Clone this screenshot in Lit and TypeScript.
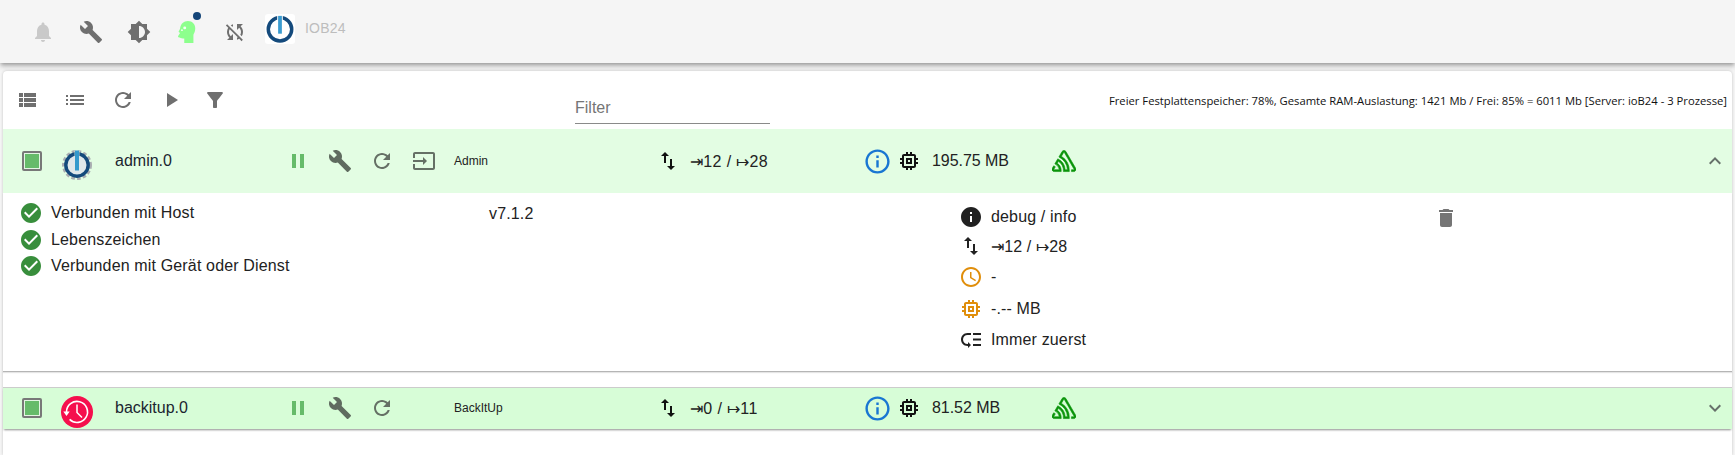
import { LitElement, html, css, svg } from "lit";
import { customElement } from "lit/decorators.js";

const P = {
  bell: "M12 22c1.1 0 2-.9 2-2h-4c0 1.1.89 2 2 2zm6-6v-5c0-3.07-1.64-5.64-4.5-6.32V4c0-.83-.67-1.5-1.5-1.5s-1.5.67-1.5 1.5v.68C7.63 5.36 6 7.92 6 11v5l-2 2v1h16v-1l-2-2z",
  build: "M22.7 19l-9.1-9.1c.9-2.3.4-5-1.5-6.9-2-2-5-2.4-7.4-1.3L9 6 6 9 1.6 4.7C.4 7.1.9 10.1 2.9 12.1c1.9 1.9 4.6 2.4 6.9 1.5l9.1 9.1c.4.4 1 .4 1.4 0l2.3-2.3c.5-.4.5-1.1.1-1.4z",
  bright: "M20 15.31L23.31 12 20 8.69V4h-4.69L12 .69 8.69 4H4v4.69L.69 12 4 15.31V20h4.69L12 23.31 15.31 20H20v-4.69zM12 18V6c3.31 0 6 2.69 6 6s-2.69 6-6 6z",
  syncOff: "M10 6.35V4.26c-.8.21-1.55.54-2.23.96l1.46 1.46c.25-.12.5-.24.77-.33zm-7.14-.94l2.36 2.36C4.45 8.99 4 10.44 4 12c0 2.21.91 4.2 2.36 5.64L4 20h6v-6l-2.24 2.24C6.68 15.15 6 13.66 6 12c0-1 .25-1.94.68-2.77l8.08 8.08c-.25.13-.5.25-.77.34v2.09c.8-.21 1.55-.54 2.23-.96l2.36 2.36 1.27-1.27L4.14 4.14 2.86 5.41zM20 4h-6v6l2.24-2.24C17.32 8.85 18 10.34 18 12c0 1-.25 1.94-.68 2.77l1.46 1.46C19.55 15.01 20 13.56 20 12c0-2.21-.91-4.2-2.36-5.64L20 4z",
  viewList: "M4 14h4v-4H4v4zm0 5h4v-4H4v4zM4 9h4V5H4v4zm5 5h12v-4H9v4zm0 5h12v-4H9v4zM9 5v4h12V5H9z",
  list: "M3 13h2v-2H3v2zm0 4h2v-2H3v2zm0-8h2V7H3v2zm4 4h14v-2H7v2zm0 4h14v-2H7v2zM7 7v2h14V7H7z",
  refresh: "M17.65 6.35C16.2 4.9 14.21 4 12 4c-4.42 0-7.99 3.58-7.99 8s3.57 8 7.99 8c3.73 0 6.84-2.55 7.73-6h-2.08c-.82 2.33-3.04 4-5.65 4-3.31 0-6-2.69-6-6s2.69-6 6-6c1.66 0 3.14.69 4.22 1.78L13 11h7V4l-2.35 2.35z",
  play: "M8 5v14l11-7z",
  filter: "M4.25 5.61C6.27 8.2 10 13 10 13v6c0 .55.45 1 1 1h2c.55 0 1-.45 1-1v-6s3.72-4.8 5.74-7.39c.51-.66.04-1.61-.79-1.61H5.04c-.83 0-1.3.95-.79 1.61z",
  pause: "M6 19h4V5H6v14zm8-14v14h4V5h-4z",
  input: "M21 3.01H3c-1.1 0-2 .9-2 2V9h2V4.99h18v14.03H3V15H1v4.01c0 1.1.9 1.98 2 1.98h18c1.1 0 2-.88 2-1.98v-14c0-1.11-.9-2-2-2zM11 16l4-4-4-4v3H1v2h10v3z",
  swap: "M9 3L5 6.99h3V14h2V6.99h3L9 3zm7 14.01V10h-2v7.01h-3L15 21l4-3.99h-3z",
  info: "M11 7h2v2h-2zm0 4h2v6h-2zm1-9C6.48 2 2 6.48 2 12s4.48 10 10 10 10-4.48 10-10S17.52 2 12 2zm0 18c-4.41 0-8-3.59-8-8s3.59-8 8-8 8 3.59 8 8-3.59 8-8 8z",
  memory: "M15 9H9v6h6V9zm-2 4h-2v-2h2v2zm8-2V9h-2V7c0-1.1-.9-2-2-2h-2V3h-2v2h-2V3H9v2H7c-1.1 0-2 .9-2 2v2H3v2h2v2H3v2h2v2c0 1.1.9 2 2 2h2v2h2v-2h2v2h2v-2h2c1.1 0 2-.9 2-2v-2h2v-2h-2v-2h2zm-4 6H7V7h10v10z",
  less: "M12 8l-6 6 1.41 1.41L12 10.83l4.59 4.58L18 14z",
  more: "M16.59 8.59L12 13.17 7.41 8.59 6 10l6 6 6-6z",
  check: "M12 2C6.48 2 2 6.48 2 12s4.48 10 10 10 10-4.48 10-10S17.52 2 12 2zm-2 15l-5-5 1.41-1.41L10 14.17l7.59-7.59L19 8l-9 9z",
  infoFill: "M12 2C6.48 2 2 6.48 2 12s4.48 10 10 10 10-4.48 10-10S17.52 2 12 2zm1 15h-2v-6h2v6zm0-8h-2V7h2v2z",
  clock: "M11.99 2C6.47 2 2 6.48 2 12s4.47 10 9.99 10C17.52 22 22 17.52 22 12S17.52 2 11.99 2zM12 20c-4.42 0-8-3.58-8-8s3.58-8 8-8 8 3.58 8 8-3.58 8-8 8zm.5-13H11v6l5.25 3.15.75-1.23-4.5-2.67z",
  trash: "M6 19c0 1.1.9 2 2 2h8c1.1 0 2-.9 2-2V7H6v12zM19 4h-3.5l-1-1h-5l-1 1H5v2h14V4z",
  prio: "M14 5h8v2h-8zm0 5.5h8v2h-8zm0 5.5h8v2h-8zM2 11.5C2 15.08 4.92 18 8.5 18H9v2l3-3-3-3v2h-.5C6.02 16 4 13.98 4 11.5S6.02 7 8.5 7H12V5H8.5C4.92 5 2 7.92 2 11.5z",
  sentry: "M13.91 2.505c-.873-1.448-2.972-1.448-3.844 0L6.904 7.92a15.478 15.478 0 0 1 8.53 12.811h-2.221A13.301 13.301 0 0 0 5.784 9.814l-2.926 5.06a7.65 7.65 0 0 1 4.435 5.848H2.194a.365.365 0 0 1-.298-.534l1.413-2.402a5.16 5.16 0 0 0-1.614-.913L.296 19.275a2.182 2.182 0 0 0 .812 2.999 2.24 2.24 0 0 0 1.086.288h6.983a9.322 9.322 0 0 0-3.845-8.318l1.11-1.922a11.47 11.47 0 0 1 4.95 10.24h5.915a17.242 17.242 0 0 0-7.885-15.28l2.244-3.845a.37.37 0 0 1 .504-.13c.255.14 9.75 16.708 9.928 16.9a.365.365 0 0 1-.327.543h-2.287c.029.612.029 1.223 0 1.831h2.297a2.206 2.206 0 0 0 1.922-3.31z",
};

const ic = (d: string, size: number, color: string) => html`<svg width=${size} height=${size} viewBox="0 0 24 24" fill=${color}><path d=${d}></path></svg>`;

const sentryIcon = html`<svg width="24" height="24" viewBox="0 0 24 24" fill="#0a940a" stroke="#0a940a" stroke-width=".6"><path d=${P.sentry}></path></svg>`;

const ioLogo = svg`
  <circle cx="16" cy="16.200" r="12.500" fill="none" stroke="#144a7c" stroke-width="3.700"></circle>
  <rect x="13" y="1" width="6" height="6" fill="#fff"></rect>
  <rect x="14" y="2" width="4" height="19" fill="#3a9bd0"></rect>`;

const adminLogo = html`<svg width="32" height="32" viewBox="0 0 32 32">
  <circle cx="16" cy="16" r="13.500" fill="none" stroke="#a9adb1" stroke-width="3" stroke-dasharray="3.600 2.200"></circle>
  <circle cx="16" cy="16" r="11.200" fill="#dfe7ea"></circle>
  <circle cx="16" cy="16" r="11.200" fill="none" stroke="#144a7c" stroke-width="3.400"></circle>
  <rect x="13.600" y="1.500" width="4.800" height="6" fill="#dff8e8"></rect>
  <rect x="14" y="1.500" width="4" height="20" fill="#3399cc"></rect>
</svg>`;

const backitupLogo = html`<svg width="32" height="32" viewBox="0 0 32 32">
  <circle cx="16" cy="16" r="16" fill="#f50f4d"></circle>
  <path d="M5.500 16a10.500 10.500 0 1 1 3.100 7.400" fill="none" stroke="#fff" stroke-width="1.600"></path>
  <path d="M2.300 15.500h6.400L5.500 20z" fill="#fff"></path>
  <path d="M16 8.500v8l5 5" fill="none" stroke="#fff" stroke-width="1.500"></path>
</svg>`;

const headIcon = html`<svg width="22" height="26" viewBox="0 0 24 28">
  <path d="M4 20c-.8-.2-2-.6-1.800-1.500L4.400 15 3 14c-.6-.6 1-2.200 1.400-3.600C5 5 8.500 2 13 2c5 0 8 3.600 8 8 0 3.400-1 5-2 7v9H9v-5c-2 0-4 0-5-1z" fill="#8dff8d"></path>
  <circle cx="9.500" cy="9.500" r="1.600" fill="#f4fff4"></circle>
  <circle cx="6.500" cy="12" r="1" fill="#f4fff4"></circle>
</svg>`;

interface Row { name: string; title: string; logo: unknown; input: boolean; conn: string; mem: string; open: boolean; }

@customElement("app-root")
export class AppRoot extends LitElement {
  static styles = css`
    :host { display: block; width: 1735px; height: 455px; overflow: hidden; background: #f5f5f5; font-family: "Liberation Sans", Arial, sans-serif; color: #212121; }
    svg { display: block; flex: none; }
    .appbar { height: 63px; background: #f5f5f5; box-shadow: 0 2px 4px -1px rgba(0,0,0,.3), 0 4px 5px 0 rgba(0,0,0,.16); display: flex; align-items: center; padding-left: 19px; position: relative; }
    .bar-btn { width: 48px; height: 48px; display: flex; align-items: center; justify-content: center; position: relative; }
    .dot { position: absolute; left: 30px; top: 4px; width: 8px; height: 8px; border-radius: 50%; background: #144578; }
    .brand { width: 30px; height: 30px; background: #fff; border-radius: 3px; margin-left: 6px; margin-top: -6px; }
    .brand-text { margin-left: 10px; margin-top: -7px; font-size: 14px; color: #bdbdbd; letter-spacing: .2px; }
    .paper { margin: 8px 3px 0; height: 384px; background: #fff; border-radius: 4px 4px 0 0; box-shadow: 0 0 3px rgba(0,0,0,.2); }
    .toolbar { height: 58px; display: flex; align-items: center; }
    .tool { width: 48px; height: 48px; display: flex; align-items: center; justify-content: center; }
    .tool.narrow { width: 39px; }
    .filter { margin-left: 341px; width: 195px; height: 30px; margin-top: 16px; border-bottom: 1px solid #8a8a8a; font-size: 16px; color: #757575; line-height: 29px; }
    .status { margin-left: auto; margin-top: 1px; padding-right: 5px; font-family: "Open Sans", "Liberation Sans", sans-serif; font-size: 11.26px; color: #111; white-space: nowrap; }
    .row { display: grid; grid-template-columns: 58px 32px 184px 42px 42px 42px 42px 212px 22px 182px 32px 32px 127px 1fr 34px; align-items: center; height: 64px; background: #e3fde3; color: #1b2530; box-sizing: border-box; }
    .row.closed { height: 42px; background: #d7fdd7; border-top: 1px solid #ccc; box-shadow: 0 2px 2px -1px rgba(0,0,0,.45); padding-bottom: 1px; }
    .cell { display: flex; align-items: center; justify-content: center; }
    .logo { display: flex; justify-content: center; margin-top: 8px; }
    .box { width: 20px; height: 20px; box-sizing: border-box; border: 2px solid #787878; border-radius: 2px; background: #66bb6a; box-shadow: inset 0 0 0 1px #e3f5e3; justify-self: center; }
    .name { padding-left: 22px; font-size: 16px; white-space: nowrap; }
    .title { padding-left: 9px; font-size: 12px; color: #222; }
    .conn { font-size: 16px; padding-left: 11px; white-space: nowrap; color: #222; letter-spacing: .35px; }
    .mem { font-size: 16px; padding-left: 7px; white-space: nowrap; color: #222; letter-spacing: -.05px; }
    .details { height: 179px; box-sizing: border-box; display: grid; grid-template-columns: 486px 470px 475px 1fr; border-bottom: 1px solid #b5b5b5; box-shadow: 0 1px 1px rgba(0,0,0,.1); }
    .states { display: grid; grid-auto-rows: 26.500px; padding: 7px 0 0 16px; align-content: start; }
    .line { display: flex; align-items: center; gap: 8px; font-size: 16px; color: #222; white-space: nowrap; letter-spacing: .15px; }
    .version { padding-top: 12px; font-size: 16px; color: #222; letter-spacing: .15px; }
    .info { display: grid; grid-template-rows: 30px 28px 33px 31px 32px; padding-top: 9px; align-content: start; }
    .trash { padding-top: 13px; }
    .gap { height: 15px; }
  `;

  private rowTpl(r: Row) {
    const g = "#657065";
    return html`<div class="row ${r.open ? "" : "closed"}">
      <div class="box"></div>
      <div class="logo">${r.logo}</div>
      <div class="name">${r.name}</div>
      <div class="cell">${ic(P.pause, 24, "#66bb6a")}</div>
      <div class="cell">${ic(P.build, 24, "#5f6b5f")}</div>
      <div class="cell">${ic(P.refresh, 24, g)}</div>
      <div class="cell">${r.input ? ic(P.input, 24, g) : ""}</div>
      <div class="title">${r.title}</div>
      <div class="cell">${ic(P.swap, 24, "#111")}</div>
      <div class="conn">${r.conn}</div>
      <div class="cell">${ic(P.info, 29, "#1976d2")}</div>
      <div class="cell">${ic(P.memory, 24, "#111")}</div>
      <div class="mem">${r.mem}</div>
      <div class="sentry">${sentryIcon}</div>
      <div class="cell">${ic(r.open ? P.less : P.more, 24, "#66706a")}</div>
    </div>`;
  }

  render() {
    const grey = "#6f6f6f";
    return html`
      <div class="appbar">
        <div class="bar-btn">${ic(P.bell, 24, "#c9c9c9")}</div>
        <div class="bar-btn">${ic(P.build, 24, grey)}</div>
        <div class="bar-btn">${ic(P.bright, 24, grey)}</div>
        <div class="bar-btn">${headIcon}<span class="dot"></span></div>
        <div class="bar-btn">${ic(P.syncOff, 24, grey)}</div>
        <div class="brand"><svg width="30" height="30" viewBox="0 0 32 32">${ioLogo}</svg></div>
        <div class="brand-text">IOB24</div>
      </div>
      <div class="paper">
        <div class="toolbar">
          <div class="tool">${ic(P.viewList, 24, grey)}</div>
          <div class="tool">${ic(P.list, 24, grey)}</div>
          <div class="tool">${ic(P.refresh, 24, grey)}</div>
          <div class="tool">${ic(P.play, 24, grey)}</div>
          <div class="tool narrow">${ic(P.filter, 24, grey)}</div>
          <div class="filter">Filter</div>
          <div class="status">Freier Festplattenspeicher: 78%, Gesamte RAM-Auslastung: 1421 Mb / Frei: 85% = 6011 Mb [Server: ioB24 - 3 Prozesse]</div>
        </div>
        ${this.rowTpl({ name: "admin.0", title: "Admin", logo: adminLogo, input: true, conn: "⇥12 / ↦28", mem: "195.75 MB", open: true })}
        <div class="details">
          <div class="states">
            <div class="line">${ic(P.check, 24, "#388e3c")}Verbunden mit Host</div>
            <div class="line">${ic(P.check, 24, "#388e3c")}Lebenszeichen</div>
            <div class="line">${ic(P.check, 24, "#388e3c")}Verbunden mit Gerät oder Dienst</div>
          </div>
          <div class="version">v7.1.2</div>
          <div class="info">
            <div class="line">${ic(P.infoFill, 24, "#212121")}debug / info</div>
            <div class="line">${ic(P.swap, 24, "#212121")}⇥12 / ↦28</div>
            <div class="line">${ic(P.clock, 24, "#e08e0b")}-</div>
            <div class="line">${ic(P.memory, 24, "#e08e0b")}-.-- MB</div>
            <div class="line">${ic(P.prio, 24, "#212121")}Immer zuerst</div>
          </div>
          <div class="trash">${ic(P.trash, 24, "#757575")}</div>
        </div>
        <div class="gap"></div>
        ${this.rowTpl({ name: "backitup.0", title: "BackItUp", logo: backitupLogo, input: false, conn: "⇥0 / ↦11", mem: "81.52 MB", open: false })}
      </div>
    `;
  }
}
